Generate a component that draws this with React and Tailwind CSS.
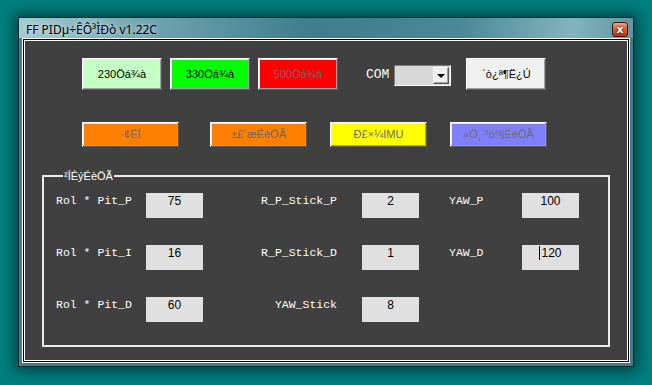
import React from "react";

const sans = "font-['Liberation_Sans',Arial,sans-serif]";
const mono = "font-['Liberation_Mono','Courier_New',monospace]";

const raised =
  "border border-t-white border-l-white border-r-[#5a5a5a] border-b-[#5a5a5a] shadow-[inset_-1px_-1px_#a0a0a0,inset_1px_1px_#e8e8e8]";

function Btn({ className, children }) {
  return (
    <div
      className={`${raised} ${sans} flex items-center justify-center text-[11px] leading-none ${className}`}
    >
      {children}
    </div>
  );
}

function Field({ value, cursor }) {
  return (
    <div
      className={`${sans} w-[57px] h-[25px] bg-[#e0e0e0] text-black text-[12px] leading-[14px] pt-[1px] text-center`}
    >
      {cursor && <span className="inline-block w-px h-[14px] bg-black align-[-3px] mr-[1px]" />}
      {value}
    </div>
  );
}

const label = `${mono} text-white text-[11.5px] leading-[14px] pt-[1px]`;

function Row({ l1, v1, l2, v2, l3, v3, cursor3 }) {
  return (
    <div className="flex items-start h-[25px]">
      <div className={`${label} w-[90px]`}>{l1}</div>
      <Field value={v1} />
      <div className={`${label} w-[159px] pr-[25px] text-right`}>{l2}</div>
      <Field value={v2} />
      {l3 ? (
        <>
          <div className={`${label} w-[103px] pl-[30px]`}>{l3}</div>
          <Field value={v3} cursor={cursor3} />
        </>
      ) : null}
    </div>
  );
}

export default function App() {
  return (
    <div className="w-[652px] h-[385px] bg-[#008080] pl-[18px] pt-[17px] overflow-hidden">
      <div className="w-[616px] h-[350px] border border-[#12262b] bg-[#3f7f8e] flex flex-col shadow-[0_0_14px_4px_rgba(0,0,0,0.5)]">
        {/* title bar */}
        <div className="h-[20px] flex items-start justify-between pl-[7px] pr-[5px] bg-[linear-gradient(90deg,#a3cad2_0%,#6ea3ae_22%,#3d7d8c_48%,#4a8997_72%,#82b4bc_90%,#5f98a4_100%)]">
          <span className="text-[12px] leading-[14px] mt-[5px] text-black font-['Noto_Sans',sans-serif] [text-shadow:0_0_5px_rgba(255,255,255,0.9)]">
            FF PIDµ÷ÊÔ³ÌÐò v1.22C
          </span>
          <div className="mt-[4px] w-[16px] h-[15px] rounded-[3px] border border-[#4a1208] bg-[linear-gradient(180deg,#f0a080_0%,#d85a38_50%,#b83418_100%)] flex items-center justify-center">
            <span className="text-white text-[11px] leading-none font-bold font-['DejaVu_Sans',sans-serif] [text-shadow:0_0_2px_#000]">
              x
            </span>
          </div>
        </div>
        {/* client frame */}
        <div className="mx-[3px] mb-[3px] flex-1 border border-white flex">
          <div className="flex-1 border border-black flex">
            <div className="flex-1 border border-white bg-[#404040] flex flex-col">
              {/* row 1 */}
              <div className="flex items-center mt-[17px] ml-[57px]">
                <Btn className="w-[80px] h-[32px] bg-[#c4ffc4] text-black">230Öá¾à</Btn>
                <Btn className="w-[80px] h-[32px] bg-[#00ff00] text-black ml-[8px]">330Öá¾à</Btn>
                <Btn className="w-[80px] h-[32px] bg-[#ff0000] text-[#6a6a6a] ml-[8px]">500Öá¾à</Btn>
                <span className={`${mono} text-white text-[13px] ml-[28px] mt-[1px]`}>COM</span>
                <div className="ml-[5px] mt-[3px] w-[57px] h-[21px] border border-t-[#808080] border-l-[#808080] border-r-white border-b-white bg-[#d8d8d8] flex justify-end items-center pr-[1px]">
                  <div className={`${raised} w-[16px] h-[17px] bg-[#f0f0f0] flex items-center justify-center`}>
                    <div className="w-0 h-0 border-l-[4px] border-r-[4px] border-t-[4px] border-l-transparent border-r-transparent border-t-black" />
                  </div>
                </div>
                <Btn className="w-[80px] h-[32px] bg-[#f0f0f0] text-black ml-[15px]">´ò¿ª¶Ë¿Ú</Btn>
              </div>
              {/* row 2 */}
              <div className="flex items-center mt-[32px] ml-[57px]">
                <Btn className="w-[97px] h-[25px] bg-[#ff8000] text-[#6a6a6a]">·¢ËÍ</Btn>
                <Btn className="w-[97px] h-[25px] bg-[#ff8000] text-[#6a6a6a] ml-[31px]">±£´æÉèÖÃ</Btn>
                <Btn className="w-[97px] h-[25px] bg-[#ffff00] text-[#6a6a6a] ml-[23px]">Ð£×¼IMU</Btn>
                <Btn className="w-[97px] h-[25px] bg-[#8080ff] text-[#6a6a6a] ml-[23px]">»Ö¸´³ö³§ÉèÖÃ</Btn>
              </div>
              {/* group box */}
              <fieldset className="ml-[17px] mt-[22px] w-[568px] h-[178px] border-2 border-[#ececec] pl-[12px] pt-[10px]">
                <legend className={`${sans} text-white text-[11px] leading-[14px] ml-[7px] px-[1px]`}>
                  ²ÎÊýÉèÖÃ
                </legend>
                <div className="flex flex-col gap-[27px]">
                  <Row l1="Rol * Pit_P" v1="75" l2="R_P_Stick_P" v2="2" l3="YAW_P" v3="100" />
                  <Row l1="Rol * Pit_I" v1="16" l2="R_P_Stick_D" v2="1" l3="YAW_D" v3="120" cursor3 />
                  <Row l1="Rol * Pit_D" v1="60" l2="YAW_Stick" v2="8" />
                </div>
              </fieldset>
            </div>
          </div>
        </div>
      </div>
    </div>
  );
}
